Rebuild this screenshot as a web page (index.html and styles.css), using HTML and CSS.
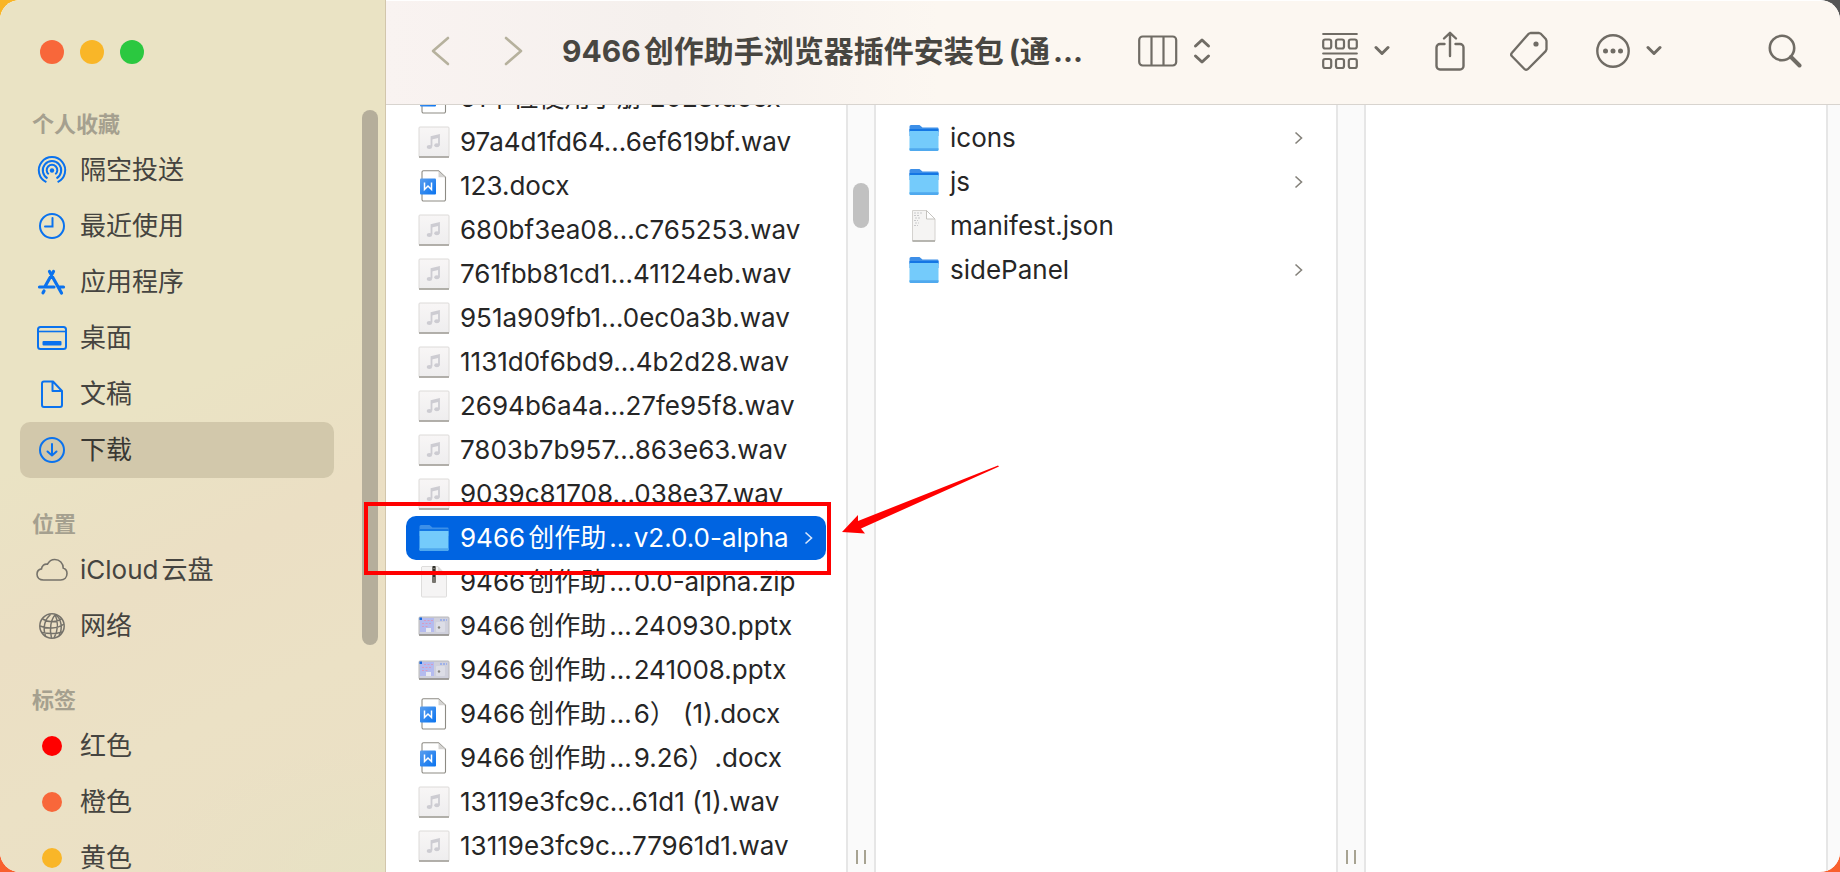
FILE: index.html
```html
<!DOCTYPE html>
<html lang="zh-CN">
<head>
<meta charset="utf-8">
<title>9466创作助手浏览器插件安装包</title>
<link rel="stylesheet" href="styles.css">
</head>
<body>
<svg class="defs" width="0" height="0" aria-hidden="true">
  <defs>
    <linearGradient id="gSheet" x1="0" y1="0" x2="0" y2="1"><stop offset="0" stop-color="#f8f6f6"/><stop offset="1" stop-color="#eeedee"/></linearGradient>
    <linearGradient id="gWord" x1="0" y1="0" x2="1" y2="1"><stop offset="0" stop-color="#5a9eee"/><stop offset="1" stop-color="#0a74f0"/></linearGradient>
    <symbol id="wav" viewBox="0 0 32 32">
      <rect x="1" y="1" width="30" height="30" rx="1" fill="url(#gSheet)" stroke="#dcdad8"/>
      <path d="M1 31h30" stroke="#a3a19a" stroke-width="1.6"/>
      <path d="M13.5 20.5V11l7.500-1.800v9.800" fill="none" stroke="#cdccd2" stroke-width="1.800"/>
      <path d="M13.500 12.200l7.500-1.800" stroke="#cdccd2" stroke-width="2.600"/>
      <ellipse cx="11.400" cy="20.900" rx="2.700" ry="2" fill="#cdccd2"/><ellipse cx="18.900" cy="19.300" rx="2.700" ry="2" fill="#cdccd2"/>
    </symbol>
    <symbol id="docx" viewBox="0 0 32 32">
      <path d="M5.500 .700h15l7 6.600V29.500a1.500 1.500 0 0 1-1.500 1.500H5.500A1.500 1.500 0 0 1 4 29.500V2.200A1.500 1.500 0 0 1 5.500.700z" fill="#fff" stroke="#8d8b84" stroke-width="1.100"/>
      <path d="M20.500 1v6.300h7z" fill="#d5d4d2"/>
      <rect x="2" y="8.500" width="16" height="16" rx="1" fill="url(#gWord)"/>
      <path d="M6.500 12.500v7l3.500-3.500 3.500 3.500v-7" fill="none" stroke="#fff" stroke-width="1.500"/>
    </symbol>
    <symbol id="folder" viewBox="0 0 32 32">
      <path d="M1.500 4.500a1.500 1.500 0 0 1 1.500-1.500h8.500l3 2.500h15a1 1 0 0 1 1 1V14h-29z" fill="#3d8fe8"/>
      <path d="M1.500 7h29v3h-29z" fill="#1476e4"/>
      <path d="M1.500 9h29v18.500a1.500 1.500 0 0 1-1.500 1.500H3a1.500 1.500 0 0 1-1.500-1.500z" fill="#74cbfb"/>
      <path d="M1.500 26.200h29v1.300a1.500 1.500 0 0 1-1.500 1.500H3a1.500 1.500 0 0 1-1.500-1.500z" fill="#4fa9ee"/>
    </symbol>
    <symbol id="zip" viewBox="0 0 32 32">
      <path d="M4 .500h16l8.500 9V30a1 1 0 0 1-1 1h-23a1 1 0 0 1-1-1V1z" fill="#f5f4f4" stroke="#dedddc"/>
      <path d="M20 .500v9h8.500z" fill="#dcdbda"/>
      <rect x="14" y="0" width="4" height="17" rx="1" fill="#77756f"/><path d="M16 0v11" stroke="#33322f" stroke-width="2" stroke-dasharray="2 1"/>
    </symbol>
    <symbol id="pptx" viewBox="0 0 32 32">
      <rect x="1" y="7" width="30" height="18" rx="1" fill="#cfd0dc" stroke="#b9b8ba"/>
      <path d="M1 25h30" stroke="#8f8d89" stroke-width="1.500"/>
      <rect x="2" y="8" width="14" height="14" fill="#b4bbef"/><rect x="1.500" y="7.500" width="2.500" height="2.500" fill="#1769e0"/>
      <path d="M6 10.500h9M4 13.500h9M4 16.500h7" stroke="#d99bbf" stroke-width="1.200" stroke-dasharray="2 1.500"/>
      <rect x="8" y="18" width="5" height="4" fill="#e8e9f2"/><rect x="18" y="12" width="9" height="10" rx="1" fill="#dcdde6"/>
      <path d="M22 10h7" stroke="#8ea7ed" stroke-width="1.400" stroke-dasharray="2 1"/><circle cx="21" cy="17.500" r="1.200" fill="#85837f"/>
    </symbol>
    <symbol id="json" viewBox="0 0 32 32">
      <path d="M4.500 .500h14L27 9v22H4.500z" fill="#f5f4f3" stroke="#d4d2cf"/>
      <path d="M4.500 31H27" stroke="#a3a19a" stroke-width="1.400"/><path d="M18.500 .500V9H27z" fill="#fff" stroke="#c5c3bf"/>
      <path d="M6 3h9M6 5.500h6M7 8h5M6 10.500h4M7 13h4M6 15.500h4" stroke="#c9c9cb" stroke-width="1.200" stroke-dasharray="2 1"/>
    </symbol>
    <symbol id="next" viewBox="0 0 10 16"><path d="M1.500 2.500L7.500 8l-6 5.500" fill="none" stroke="currentColor" stroke-width="1.600"/></symbol>
    <symbol id="down" viewBox="0 0 16 12"><path d="M2 2.500l6 6 6-6" fill="none" stroke="currentColor" stroke-width="3" stroke-linecap="round" stroke-linejoin="round"/></symbol>
  </defs>
</svg>
<div class="window">
  <aside class="sidebar">
    <div class="lights">
      <button class="light close" aria-label="关闭"></button>
      <button class="light minimize" aria-label="最小化"></button>
      <button class="light zoom" aria-label="缩放"></button>
    </div>
    <nav class="places">
      <h2>个人收藏</h2>
      <a href="#airdrop"><svg class="side-icon" viewBox="0 0 32 32"><g fill="none" stroke="currentColor" stroke-width="2"><path d="M10.400 28.200a13.200 13.200 0 1 1 11.200 0"/><path d="M11.500 24.300a9.200 9.200 0 1 1 9 0"/><path d="M12.700 20.300a5.300 5.300 0 1 1 6.600 0"/></g><circle cx="16" cy="16.500" r="2.200" fill="currentColor"/></svg><span>隔空投送</span></a>
      <a href="#recents"><svg class="side-icon" viewBox="0 0 32 32"><g fill="none" stroke="currentColor" stroke-width="2"><circle cx="16" cy="16" r="12"/><path d="M16.500 8v8.500H9" stroke-linecap="round"/></g></svg><span>最近使用</span></a>
      <a href="#applications"><svg class="side-icon" viewBox="0 0 32 32"><g fill="none" stroke="currentColor" stroke-width="3.200" stroke-linecap="round"><path d="M17.500 5.500L9 20.500M13.500 5.500l12 21.500M3.500 21h14.500M23.500 21h4M8 25l-1 1.800"/></g></svg><span>应用程序</span></a>
      <a href="#desktop"><svg class="side-icon" viewBox="0 0 32 32"><rect x="2" y="5" width="28" height="22" rx="2.500" fill="none" stroke="currentColor" stroke-width="2"/><path d="M2 9.500h28" stroke="currentColor" stroke-width="1.600"/><rect x="6.500" y="19" width="19" height="4.500" rx="1" fill="currentColor"/></svg><span>桌面</span></a>
      <a href="#documents"><svg class="side-icon" viewBox="0 0 32 32"><path d="M8 3.500h9L26 13v14a2 2 0 0 1-2 2H8a2 2 0 0 1-2-2V5.500a2 2 0 0 1 2-2zM16.500 3.500V13H26" fill="none" stroke="currentColor" stroke-width="2" stroke-linejoin="round"/></svg><span>文稿</span></a>
      <a href="#downloads" class="current" aria-current="page"><svg class="side-icon" viewBox="0 0 32 32"><g fill="none" stroke="currentColor" stroke-width="2" stroke-linecap="round" stroke-linejoin="round"><circle cx="16" cy="16" r="12"/><path d="M16 10v11.500M11.500 17.500l4.500 4 4.500-4"/></g></svg><span>下载</span></a>
      <h2>位置</h2>
      <a href="#icloud" class="grey"><svg class="side-icon" viewBox="0 0 32 32"><path d="M7.500 26C3.500 26 1 23.500 1 20.300c0-2.900 2-4.900 4.500-5.400.2-3.300 3-5.300 6-4.700 1.500-3 4.200-4.700 7.300-4.700 4.900 0 8.400 3.800 8.400 8.600 2.300.8 3.800 3 3.800 5.500 0 3.700-2.600 6.400-6.300 6.400z" fill="none" stroke="currentColor" stroke-width="1.600"/></svg><span><span class="latin">iCloud</span>云盘</span></a>
      <a href="#network" class="grey"><svg class="side-icon" viewBox="0 0 32 32"><g fill="none" stroke="currentColor" stroke-width="1.500"><circle cx="16" cy="16" r="12.200"/><path d="M19.500 4.500C15 9 13 19 15.500 28M14.500 4.500C9 9 6.500 17 9.500 26M19 4.500c2.500 5 4 14-1 23.500M19.500 4.500c6 4.500 7.500 14 3.500 21M6.500 9c6 3.500 13 3.500 19 0M4 16c7 3 17 3 24-2M6 22.500c7 1.500 14 1.500 20-.5"/></g></svg><span>网络</span></a>
      <h2>标签</h2>
      <a href="#red"><span class="dot red"></span><span>红色</span></a>
      <a href="#orange"><span class="dot orange"></span><span>橙色</span></a>
      <a href="#yellow"><span class="dot yellow"></span><span>黄色</span></a>
    </nav>
    <div class="side-scroll"></div>
  </aside>
  <main class="main">
    <header class="toolbar">
      <div class="history">
        <button aria-label="后退"><svg width="20" height="32" viewBox="0 0 20 32"><path d="M17 3L2 16l15 13" fill="none" stroke="#b6b19d" stroke-width="2.600" stroke-linecap="round" stroke-linejoin="round"/></svg></button>
        <button aria-label="前进"><svg width="20" height="32" viewBox="0 0 20 32"><path d="M3 3l15 13L3 29" fill="none" stroke="#b6b19d" stroke-width="2.600" stroke-linecap="round" stroke-linejoin="round"/></svg></button>
      </div>
      <h1><span class="latin">9466</span>创作助手浏览器插件安装包<span class="paren">(</span>通<span class="dots">...</span></h1>
      <button class="view" aria-label="显示方式">
        <svg width="40" height="32" viewBox="0 0 40 32"><g fill="none" stroke="currentColor" stroke-width="2.200"><rect x="1.200" y="1.500" width="37" height="29" rx="3.500"/><path d="M13.500 2v28M25.500 2v28"/></g></svg>
        <svg width="18" height="28" viewBox="0 0 18 28"><path d="M2.500 9L9 3l6.500 6M2.500 19L9 25l6.500-6" fill="none" stroke="currentColor" stroke-width="3" stroke-linecap="round" stroke-linejoin="round"/></svg>
      </button>
      <div class="actions">
        <button class="menu" aria-label="分组"><svg width="36" height="38" viewBox="0 0 36 38"><g fill="none" stroke="currentColor" stroke-width="2.200" stroke-linecap="round"><path d="M1.200 2h33.600M1.200 21.500h33.600"/><rect x="1.200" y="7.500" width="8" height="9" rx="2"/><rect x="14" y="7.500" width="8" height="9" rx="2"/><rect x="26.800" y="7.500" width="8" height="9" rx="2"/><rect x="1.200" y="27" width="8" height="9" rx="2"/><rect x="14" y="27" width="8" height="9" rx="2"/><rect x="26.800" y="27" width="8" height="9" rx="2"/></g></svg><svg width="16" height="12"><use href="#down"/></svg></button>
        <button class="share" aria-label="共享"><svg width="30" height="40" viewBox="0 0 30 40"><g fill="none" stroke="currentColor" stroke-width="2.400" stroke-linecap="round" stroke-linejoin="round"><path d="M9.500 13H5a3.500 3.500 0 0 0-3.500 3.500V35A3.500 3.500 0 0 0 5 38.500h20a3.500 3.500 0 0 0 3.500-3.500V16.500A3.500 3.500 0 0 0 25 13h-4.500M15 25V2M9 7.500L15 1.800l6 5.700"/></g></svg></button>
        <button class="tag" aria-label="标签"><svg width="38" height="40" viewBox="0 0 38 40"><path d="M20.500 2h8.500l1.800.8 5 5.200.7 1.800v8.500l-.8 1.800L18 38a2.500 2.500 0 0 1-3.600 0L2 25.300a2.500 2.500 0 0 1 0-3.500L18.700 2.700z" fill="none" stroke="currentColor" stroke-width="2.300" stroke-linejoin="round"/><circle cx="26" cy="13" r="2.600" fill="currentColor"/></svg></button>
        <button class="menu" aria-label="操作"><svg width="34" height="36" viewBox="0 0 34 36"><circle cx="17" cy="18" r="15.700" fill="none" stroke="currentColor" stroke-width="2.400"/><g fill="currentColor"><circle cx="9.500" cy="18" r="2.500"/><circle cx="17" cy="18" r="2.500"/><circle cx="24.500" cy="18" r="2.500"/></g></svg><svg width="16" height="12"><use href="#down"/></svg></button>
        <button class="search" aria-label="搜索"><svg width="34" height="34" viewBox="0 0 34 34"><circle cx="14" cy="14" r="12.200" fill="none" stroke="currentColor" stroke-width="2.600"/><path d="M23 23l8.500 8.500" stroke="currentColor" stroke-width="4" stroke-linecap="round"/></svg></button>
      </div>
    </header>
    <div class="columns">
      <section class="column scrolled">
        <button class="row"><svg><use href="#docx"/></svg><span>51个位使用手册 2023.docx</span></button>
        <button class="row"><svg><use href="#wav"/></svg><span>97a4d1fd64…6ef619bf.wav</span></button>
        <button class="row"><svg><use href="#docx"/></svg><span>123.docx</span></button>
        <button class="row"><svg><use href="#wav"/></svg><span>680bf3ea08…c765253.wav</span></button>
        <button class="row"><svg><use href="#wav"/></svg><span>761fbb81cd1…41124eb.wav</span></button>
        <button class="row"><svg><use href="#wav"/></svg><span>951a909fb1…0ec0a3b.wav</span></button>
        <button class="row"><svg><use href="#wav"/></svg><span>1131d0f6bd9…4b2d28.wav</span></button>
        <button class="row"><svg><use href="#wav"/></svg><span>2694b6a4a…27fe95f8.wav</span></button>
        <button class="row"><svg><use href="#wav"/></svg><span>7803b7b957…863e63.wav</span></button>
        <button class="row"><svg><use href="#wav"/></svg><span>9039c81708…038e37.wav</span></button>
        <button class="row selected"><svg><use href="#folder"/></svg><span><span class="latin">9466</span>创作助<span class="dots">...</span>v2.0.0-alpha</span><svg class="chev"><use href="#next"/></svg></button>
        <button class="row"><svg><use href="#zip"/></svg><span><span class="latin">9466</span>创作助<span class="dots">...</span>0.0-alpha.zip</span></button>
        <button class="row"><svg><use href="#pptx"/></svg><span><span class="latin">9466</span>创作助<span class="dots">...</span>240930.pptx</span></button>
        <button class="row"><svg><use href="#pptx"/></svg><span><span class="latin">9466</span>创作助<span class="dots">...</span>241008.pptx</span></button>
        <button class="row"><svg><use href="#docx"/></svg><span><span class="latin">9466</span>创作助<span class="dots">...</span>6） (1).docx</span></button>
        <button class="row"><svg><use href="#docx"/></svg><span><span class="latin">9466</span>创作助<span class="dots">...</span>9.26）.docx</span></button>
        <button class="row"><svg><use href="#wav"/></svg><span>13119e3fc9c…61d1 (1).wav</span></button>
        <button class="row"><svg><use href="#wav"/></svg><span>13119e3fc9c…77961d1.wav</span></button>
      </section>
      <div class="gutter"><div class="thumb"></div><div class="grip"></div></div>
      <section class="column">
        <button class="row"><svg><use href="#folder"/></svg><span>icons</span><svg class="chev"><use href="#next"/></svg></button>
        <button class="row"><svg><use href="#folder"/></svg><span>js</span><svg class="chev"><use href="#next"/></svg></button>
        <button class="row"><svg><use href="#json"/></svg><span>manifest.json</span></button>
        <button class="row"><svg><use href="#folder"/></svg><span>sidePanel</span><svg class="chev"><use href="#next"/></svg></button>
      </section>
      <div class="gutter"><div class="grip"></div></div>
      <section class="column"></section>
      <div class="gutter last"></div>
    </div>
  </main>
  <div class="marker"></div>
  <svg class="arrow" viewBox="0 0 160 72"><path d="M0 67L16 50v6L156 0.500l1 1L19 63.500l4 5z" fill="#f00"/></svg>
</div>
</body>
</html>
```
FILE: styles.css
```css
* { box-sizing: border-box; }

html { height: 100%; }

body {
  margin: 0;
  height: 100%;
  overflow: hidden;
  background:
    linear-gradient(90deg, #f9b526 50%, #555 50%) top / 100% 50% no-repeat,
    #f8602e;
  font-family: Inter, "Noto Sans CJK SC", sans-serif;
  font-size: 26px;
  color: #262626;
}

.defs { position: absolute; }

button {
  margin: 0;
  padding: 0;
  border: 0;
  background: none;
  color: inherit;
  font: inherit;
}

.window {
  position: relative;
  display: flex;
  height: 100%;
  overflow: hidden;
  border-radius: 20px;
  background: #fff;
}

.latin { margin-right: 3px; }
.paren { margin-left: 5px; }
.dots { margin: 0 2px 0 3px; }

/* Sidebar */
.sidebar {
  position: relative;
  flex: 0 0 386px;
  display: flex;
  flex-direction: column;
  overflow: hidden;
  border-right: 1px solid #d2c6ac;
  background:
    radial-gradient(ellipse 240px 130px at 100% 100%, #e7e2c4, transparent),
    linear-gradient(155deg, #eae3c4 45%, #ebdfc4 62%, #ebe1c5 78%, #ebdfc4 100%);
}

.lights {
  flex: none;
  display: flex;
  gap: 16px;
  height: 78px;
  padding: 40px 40px 0;
}

.light {
  width: 24px;
  height: 24px;
  border-radius: 50%;
}

.close { background: #f8673a; }
.minimize { background: #f9b628; }
.zoom { background: #2bc840; }

.places {
  display: flex;
  flex-direction: column;
  padding: 0 51px 0 20px;
}

.places h2 {
  flex: none;
  margin: 0;
  padding: 28px 12px 0;
  font-size: 22px;
  line-height: 36px;
  font-weight: 700;
  color: #a5a08f;
}

.places a {
  flex: none;
  display: flex;
  align-items: center;
  height: 56px;
  padding-left: 16px;
  border-radius: 10px;
  line-height: 32px;
  color: #454440;
  text-decoration: none;
}

.places .current {
  background: #d2c8ab;
  color: #393833;
}

.side-icon {
  width: 32px;
  height: 32px;
  margin-right: 12px;
  color: #0a72ee;
}

.grey .side-icon { color: #75726a; }

.dot {
  width: 20px;
  height: 20px;
  margin: 0 18px 0 6px;
  border-radius: 50%;
}

.red { background: #f00; }
.orange { background: #f8673a; }
.yellow { background: #f9b628; }

.side-scroll {
  position: absolute;
  top: 110px;
  right: 7px;
  width: 16px;
  height: 535px;
  border-radius: 8px;
  background: #b5ae9b;
}

/* Toolbar */
.main {
  flex: 1;
  min-width: 0;
  display: flex;
  flex-direction: column;
}

.toolbar {
  flex: none;
  display: flex;
  align-items: center;
  height: 105px;
  padding: 0 38px 3px 45px;
  border-top: 1px solid #fff;
  border-bottom: 1px solid #d8d4cf;
  background: linear-gradient(90deg, #f9f3f1, #f5f0ed 20%, #fcf7f1 38%);
  color: #706c65;
}

.toolbar button {
  display: flex;
  align-items: center;
}

.history {
  display: flex;
  gap: 52px;
}

h1 {
  margin: 0 0 0 39px;
  font-size: 30px;
  line-height: 40px;
  font-weight: 700;
  white-space: nowrap;
  color: #484641;
}

.view {
  gap: 15px;
  margin-left: 53px;
}

.actions {
  display: flex;
  align-items: center;
  margin-left: auto;
}

.menu { gap: 16px; }
.share { margin-left: 45px; }
.tag { margin: 0 48px 0 45px; }
.search { margin-left: 106px; }

/* Columns */
.columns {
  flex: 1;
  min-height: 0;
  display: flex;
}

.column {
  flex: 1;
  min-width: 0;
  overflow: hidden;
  padding: 11px 20px 0;
}

.scrolled { padding-top: 0; }
.scrolled .row:first-child { margin-top: -29px; }

.row {
  display: flex;
  align-items: center;
  width: 100%;
  height: 44px;
  padding: 0 12px;
  border-radius: 10px;
  line-height: 32px;
  text-align: left;
  white-space: nowrap;
}

.row svg {
  flex: none;
  width: 32px;
  height: 32px;
  margin-right: 10px;
}

.row .chev {
  width: 10px;
  height: 16px;
  margin: 0 0 0 auto;
  color: #85827b;
}

.selected {
  background: #0064e1;
  color: #fff;
}

.selected .chev { color: #d8e6fa; }

.gutter {
  flex: 0 0 30px;
  display: flex;
  flex-direction: column;
  align-items: center;
  border: solid #e6e6e6;
  border-width: 0 2px;
  background: #fafafa;
}

.last {
  flex-basis: 14px;
  border-right: 0;
}

.thumb {
  width: 16px;
  height: 45px;
  margin-top: 78px;
  border-radius: 8px;
  background: #c1c1c1;
}

.grip {
  width: 10px;
  height: 14px;
  margin: auto 0 8px;
  border: solid #a7a392;
  border-width: 0 2px;
}

/* Annotations over the window */
.marker {
  position: absolute;
  left: 364px;
  top: 502px;
  width: 467px;
  height: 73px;
  border: 4px solid #f00;
}

.arrow {
  position: absolute;
  left: 842px;
  top: 465px;
  width: 160px;
  height: 72px;
}
```
